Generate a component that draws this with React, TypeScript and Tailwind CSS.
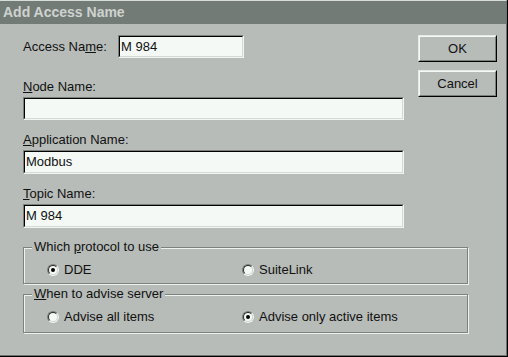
import React from 'react';

const font = { fontFamily: '"Liberation Sans", Arial, sans-serif' };

function TextBox({ value, className }: { value: string; className: string }) {
  return (
    <div className={`border border-t-[#7b807c] border-l-[#7b807c] border-b-[#f2f6f2] border-r-[#f2f6f2] ${className}`}>
      <div className="h-full border border-t-black border-l-black border-b-[#d6dad6] border-r-[#d6dad6] bg-[#f4f9f5] px-[1px] text-[13px] leading-[19px] text-[#111]">
        {value}
      </div>
    </div>
  );
}

function Button({ label }: { label: string }) {
  return (
    <div className="h-[27px] w-[79px] border border-t-[#e6eae6] border-l-[#e6eae6] border-b-black border-r-black">
      <div className="flex h-full items-center justify-center border border-t-[#f6faf6] border-l-[#f6faf6] border-b-[#7b807c] border-r-[#7b807c] text-[13px] text-[#111]">
        {label}
      </div>
    </div>
  );
}

function Radio({ checked, label }: { checked?: boolean; label: React.ReactNode }) {
  return (
    <div className="flex items-center gap-[5px] text-[13px] leading-[15px] text-[#111]">
      <div className="h-[12px] w-[12px] rounded-full border border-t-[#7b807c] border-l-[#7b807c] border-b-[#f2f6f2] border-r-[#f2f6f2]">
        <div className="flex h-full w-full items-center justify-center rounded-full border border-t-[#2a2a2a] border-l-[#2a2a2a] border-b-[#d6dad6] border-r-[#d6dad6] bg-[#f4f9f5]">
          {checked && <div className="h-[4px] w-[4px] rounded-full bg-black" />}
        </div>
      </div>
      <span>{label}</span>
    </div>
  );
}

function Group({ title, children, className }: { title: React.ReactNode; children: React.ReactNode; className: string }) {
  return (
    <div className={`relative w-[445px] border border-[#7d827e] shadow-[inset_1px_1px_0_#eef2ee,1px_1px_0_#eef2ee] ${className}`}>
      <span className="absolute -top-[9px] left-[8px] bg-[#b7bcb8] px-[2px] text-[13px] leading-[15px] text-[#111]">
        {title}
      </span>
      {children}
    </div>
  );
}

export default function App() {
  return (
    <div className="h-[357px] w-[508px] overflow-hidden bg-[#b7bcb8]" style={font}>
      <div className="h-[357px] border-r border-b border-r-black border-b-black">
        <div className="h-[356px] border-t border-r border-b border-t-[#d9ddd9] border-r-[#6e736f] border-b-[#6e736f]">
          <div className="flex h-[23px] items-center bg-[#737b77] pl-[3px] text-[14px] font-bold text-[#cfd3cf]">
            Add Access Name
          </div>

          <div className="flex pt-[11px]">
            <div className="w-[381px] pl-[23px] box-content">
              <div className="flex items-center">
                <span className="w-[95px] text-[13px] text-[#111]">
                  Access Na<u>m</u>e:
                </span>
                <TextBox value="M 984" className="h-[23px] w-[126px]" />
              </div>

              <div className="mt-[21px] text-[13px] leading-[15px] text-[#111]">
                <u>N</u>ode Name:
              </div>
              <TextBox value="" className="mt-[3px] h-[23px] w-[381px]" />

              <div className="mt-[12px] text-[13px] leading-[15px] text-[#111]">
                <u>A</u>pplication Name:
              </div>
              <TextBox value="Modbus" className="mt-[3px] h-[24px] w-[381px]" />

              <div className="mt-[12px] text-[13px] leading-[15px] text-[#111]">
                <u>T</u>opic Name:
              </div>
              <TextBox value="M 984" className="mt-[3px] h-[24px] w-[381px]" />
            </div>

            <div className="ml-[14px] flex flex-col gap-[8px]">
              <Button label="OK" />
              <Button label="Cancel" />
            </div>
          </div>

          <div className="pl-[23px]">
            <Group
              className="mt-[19px] h-[37px]"
              title={<>Which <u>p</u>rotocol to use</>}
            >
              <div className="grid grid-cols-[195px_1fr] pl-[23px] pt-[14px]">
                <Radio checked label="DDE" />
                <Radio label="SuiteLink" />
              </div>
            </Group>

            <Group
              className="mt-[10px] h-[39px]"
              title={<><u>W</u>hen to advise server</>}
            >
              <div className="grid grid-cols-[195px_1fr] pl-[23px] pt-[14px]">
                <Radio label="Advise all items" />
                <Radio checked label="Advise only active items" />
              </div>
            </Group>
          </div>
        </div>
      </div>
    </div>
  );
}
